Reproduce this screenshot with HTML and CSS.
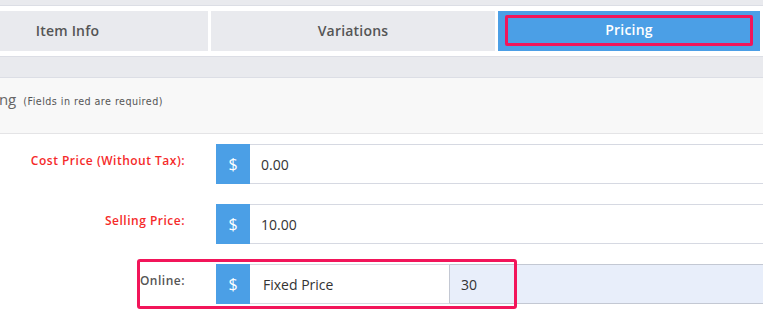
FILE: index.html
```html
<!DOCTYPE html>
<html lang="en">
<head>
    <meta charset="UTF-8">
    <meta name="viewport" content="width=device-width, initial-scale=1.0">
    <title>Item Pricing</title>
    <link rel="stylesheet" href="styles.css">
</head>
<body>
    <div class="topbar"></div>

    <div class="tabs">
        <div class="tab">Item Info</div>
        <div class="tab">Variations</div>
        <div class="tab active"><span class="mark-inner">Pricing</span></div>
    </div>

    <div class="subbar"></div>

    <div class="panel-head">
        <h2>Pricing</h2>
        <small>(Fields in red are required)</small>
    </div>

    <div class="form">
        <div class="row">
            <label class="required" for="costPrice">Cost Price (Without Tax):</label>
            <div class="group">
                <span class="addon">$</span>
                <input type="text" id="costPrice" value="0.00">
            </div>
        </div>

        <div class="row">
            <label class="required" for="sellingPrice">Selling Price:</label>
            <div class="group">
                <span class="addon">$</span>
                <input type="text" id="sellingPrice" value="10.00">
            </div>
        </div>

        <div class="row online">
            <div class="mark"></div>
            <label for="onlineType">Online:</label>
            <div class="group">
                <span class="addon">$</span>
                <input type="text" id="onlineType" class="short" value="Fixed Price">
                <input type="text" id="onlineValue" class="tinted" value="30">
            </div>
        </div>
    </div>
</body>
</html>
```

FILE: styles.css
```css
body { margin: 0; font-family: "Open Sans", "Noto Sans", sans-serif; background-color: #fff; overflow: hidden; }
.topbar { height: 5px; background-color: #e9eaee; border-bottom: 1px solid #dcdee5; }

/* tab strip, first tab runs off the left edge */
.tabs { display: grid; grid-template-columns: 281px 284px 262px; gap: 3px; padding: 5px 0; margin-left: -73px; }
.tab { height: 40px; background-color: #e9eaee; color: #555; font-size: 14px; font-weight: 600; display: flex; align-items: center; justify-content: center; letter-spacing: 0.2px; padding-bottom: 2px; box-sizing: border-box; }
.tab.active { background-color: #4b9fe6; color: #fff; padding: 4px 7px 5px; align-items: stretch; }
.mark-inner { flex: 1; display: flex; align-items: center; justify-content: center; border: 3px solid #f2155a; border-radius: 2px; padding-bottom: 2px; }

.subbar { height: 20px; background-color: #e9eaee; border-top: 1px solid #dcdee5; border-bottom: 1px solid #dcdee5; }

.panel-head { height: 56px; box-sizing: border-box; padding-top: 11px; background-color: #f8f8f8; border-bottom: 1px solid #e4e4e6; display: flex; align-items: baseline; }
.panel-head h2 { margin: 0 0 0 -31px; font-size: 15px; font-weight: 400; color: #666; }
.panel-head small { margin-left: 7px; font-family: "DejaVu Sans", sans-serif; font-size: 9.6px; letter-spacing: 0.45px; color: #555; }

.form { padding-top: 10px; margin-right: -20px; }
.row { display: flex; align-items: flex-start; margin-bottom: 20px; position: relative; }
.row label { width: 216px; box-sizing: border-box; padding: 8px 31px 0 0; text-align: right; font-size: 12px; font-weight: 600; letter-spacing: 0.5px; color: #555; }
.row label.required { color: #f52a2a; }
.group { flex: 1; display: flex; height: 40px; }
.addon { width: 34px; background-color: #4b9fe6; color: #fff; font-size: 16px; display: flex; align-items: center; justify-content: center; }
.group input { flex: 1; min-width: 0; height: 40px; box-sizing: border-box; border: 1px solid #d6d9e2; border-left: none; padding: 0 11px; font-family: "Open Sans", "Noto Sans", sans-serif; font-size: 14px; color: #333; background-color: #fff; outline: none; }
.group input.short { flex: 0 0 200px; border-right: 1px solid #c3c8d3; padding-left: 13px; }
.group input.tinted { background-color: #e8eefa; border-color: #c3c8d3; border-left: none; }

/* annotation box around the online price row */
.mark { position: absolute; left: 137px; top: -5px; width: 380px; height: 50px; box-sizing: border-box; border: 3px solid #f2155a; border-radius: 3px; pointer-events: none; }
```
